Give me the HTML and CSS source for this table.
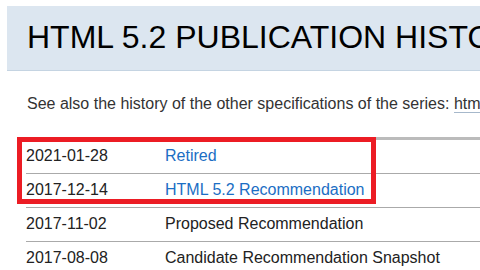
FILE: index.html
```html
<!DOCTYPE html>
<html lang="en">
<head>
<meta charset="utf-8">
<title>HTML 5.2 Publication History</title>
<link rel="stylesheet" href="styles.css">
</head>
<body>
<header class="banner">
  <h1 class="title">HTML 5.2 PUBLICATION HISTORY</h1>
</header>
<p class="intro">See also the history of the other specifications of the series: <a class="series" href="#">html</a></p>
<div class="history">
  <table class="events">
    <tr><td class="date">2021-01-28</td><td class="what"><a class="link" href="#">Retired</a></td></tr>
    <tr><td class="date">2017-12-14</td><td class="what"><a class="link" href="#">HTML 5.2 Recommendation</a></td></tr>
    <tr><td class="date">2017-11-02</td><td class="what">Proposed Recommendation</td></tr>
    <tr><td class="date">2017-08-08</td><td class="what">Candidate Recommendation Snapshot</td></tr>
  </table>
  <div class="highlight"></div>
</div>
</body>
</html>
```
FILE: styles.css
```css
html, body {
  margin: 0;
  padding: 0;
  overflow: hidden;
  background: #fff;
}
body {
  width: 480px;
  height: 270px;
  font-family: "Liberation Sans", Arial, sans-serif;
  color: #2b2b2b;
}
.banner {
  margin: 6px 0 0 7px;
  height: 65px;
  box-sizing: border-box;
  padding: 15px 0 0 20px;
  background: #dce6f0;
  border-bottom: 1px solid #c5d4e2;
  white-space: nowrap;
  overflow: hidden;
}
.title {
  margin: 0;
  font-size: 32px;
  line-height: 32px;
  font-weight: normal;
  color: #000;
}
.intro {
  margin: 23px 0 0 27px;
  font-size: 16px;
  line-height: 20px;
  white-space: nowrap;
  color: #333;
}
.series {
  color: #333;
  text-decoration: none;
  border-bottom: 1px solid #a6b8cb;
}
.history {
  position: relative;
  margin-top: 23px;
}
.events {
  margin-left: 26px;
  width: 480px;
  border-collapse: collapse;
  border-top: 3px solid #bbbbbb;
  font-size: 16px;
}
.events td {
  padding: 0 0 2px 0;
  line-height: 31px;
  border-bottom: 1px solid #aaaaaa;
  white-space: nowrap;
  color: #222;
}
.events .date {
  width: 139px;
}
.link {
  color: #1b6ec4;
  text-decoration: none;
}
.highlight {
  position: absolute;
  left: 17px;
  top: 0;
  width: 349px;
  height: 57px;
  border: 5px solid #ec1c24;
}
```
